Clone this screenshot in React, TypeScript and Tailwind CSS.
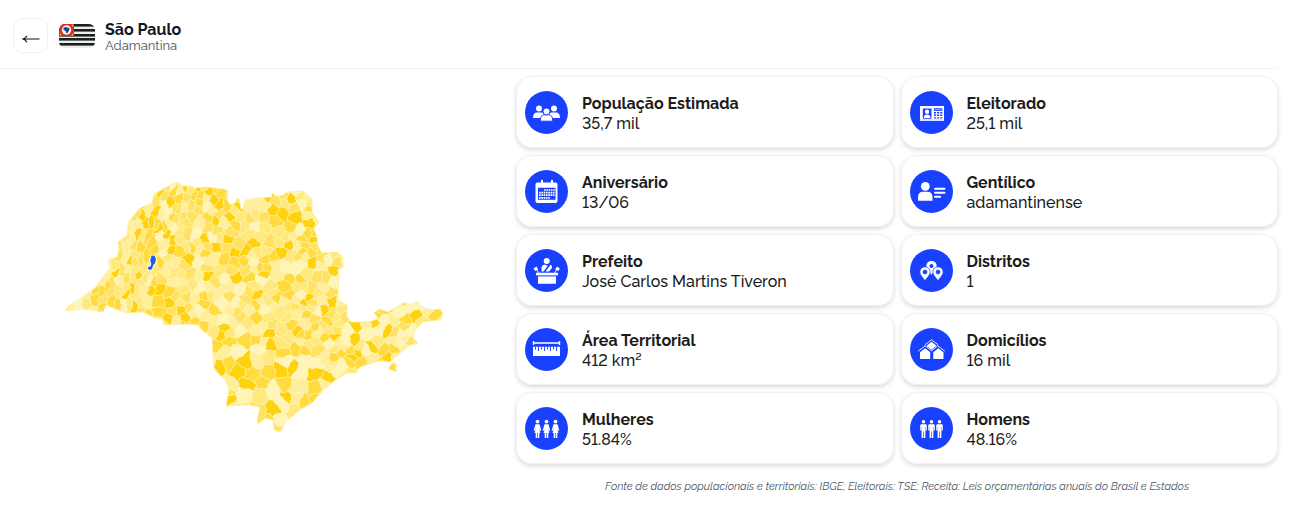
import type { ReactNode } from 'react'

type Point = [number, number]
type Seed = { p: Point; shade: number; r: number }

const SHADES = ['#fff5b8', '#ffef9a', '#ffe97c', '#ffe262', '#ffdb3e', '#ffd20f']

const OUTLINE =
  'M65 310L70 305L78 300L85 295L95 288L102 278L110 268L108 260L117 257L119 250L118 242L127 235L128 226L129 221L140 208L152 203L154 194L165 188L172 184L177 182L183 186L192 186L195 188L207 187L224 189L228 191L227 199L230 205L235 203L237 198L239 199L241 209L244 208L245 200L258 198L272 197L272 193L277 196L283 195L287 192L303 191L312 199L312 212L319 222L314 229L317 237L318 246L322 253L337 252L343 257L343 267L338 270L339 278L338 295L338 300L347 305L347 315L351 322L362 322L372 321L378 318L374 313L379 309L388 312L403 303L412 304L417 301L422 307L432 310L440 309L443 313L440 320L423 322L415 330L413 338L418 343L410 345L398 355L390 362L380 361L372 363L360 367L356 373L347 373L333 382L323 390L313 402L297 412L286 422L280 432L274 430L273 420L265 418L258 424L257 420L260 407L248 405L226 406L229 390L225 380L214 369L213 357L212 338L202 330L198 325L188 324L164 325L162 319L155 318L143 312L127 313L115 309L106 305L103 312L83 309L66 311ZM389 367L394 362L398 366L395 368L397 372L389 369Z'

// shade, preferred size of the municipality, then its centres
const LANDMARKS: [number, number, Point[]][] = [
  [5, 7, [[160, 194], [208, 192], [219, 205], [238, 205], [143, 217], [206, 240], [235, 252], [236, 277], [245, 251], [283, 212], [291, 199], [288, 245], [310, 223], [316, 240], [313, 262], [334, 270], [258, 295], [310, 297], [333, 301], [180, 310], [186, 318], [168, 318]]],
  [5, 6, [[268, 332], [222, 335], [356, 324], [375, 323], [388, 331], [355, 340], [371, 347], [415, 315], [296, 332], [357, 352], [388, 357], [220, 366], [330, 378]]],
  [5, 8, [[237, 370], [246, 362], [292, 368], [248, 385], [281, 370], [288, 397], [273, 410], [229, 400], [151, 290], [160, 288]]],
  [5, 5, [[152, 222], [160, 229], [167, 234], [173, 240], [170, 249], [130, 261], [116, 274], [138, 277], [127, 293]]],
  [4, 10, [[275, 222], [245, 261], [285, 285], [305, 402], [384, 350], [95, 299], [112, 302], [132, 208], [436, 314], [315, 388], [268, 373]]],
  [1, 12, [[251, 205], [264, 205], [277, 275], [148, 209], [257, 360], [230, 385], [300, 385]]],
  [0, 11, [[174, 228], [240, 330], [236, 350], [305, 360], [316, 364], [367, 335], [334, 281], [300, 231], [272, 390], [245, 394], [280, 420], [410, 331], [78, 303], [342, 365], [384, 320], [200, 288], [222, 303]]],
]

const ADAMANTINA = 'M151.500 255.500L154.500 255.700L156 259L155 263L153 265.500L152 269L150 270L148 269L148.200 267L151 266L151.200 263L150.200 261Z'

// The western municipalities are long strips, so cells are computed in a widened space there
const STRETCH = 1.6
const slant = (y: number) => 0.4 * (y - 250)

function widen([x, y]: Point): Point {
  const u = x + slant(y)
  return u < 172 ? [172 - (172 - u) * STRETCH - slant(y), y] : [x, y]
}

function narrow([x, y]: Point): Point {
  const u = x + slant(y)
  return u < 172 ? [172 - (172 - u) / STRETCH - slant(y), y] : [x, y]
}

// Bends the straight cell sides a little, the same way for both neighbours
function wobble([x, y]: Point): Point {
  return [
    x + Math.sin(y * 0.9 + x * 0.3) * 0.7 + Math.sin(y * 0.31) * 0.8,
    y + Math.sin(x * 0.8 - y * 0.4) * 0.7 + Math.sin(x * 0.27) * 0.8,
  ]
}

function spacing([x, y]: Point) {
  if (y > 345 && x < 335) return 10
  if (x > 345) return 7.5
  if (x > 285 && y > 305) return 5.5
  if (x < 160) return 8.5
  return 6.8
}

function clip(poly: Point[], a: Point, b: Point): Point[] {
  const nx = b[0] - a[0]
  const ny = b[1] - a[1]
  const c = (nx * (a[0] + b[0]) + ny * (a[1] + b[1])) / 2
  const side = (p: Point) => nx * p[0] + ny * p[1] - c
  const out: Point[] = []
  poly.forEach((p, i) => {
    const q = poly[(i + 1) % poly.length]
    const sp = side(p)
    const sq = side(q)
    if (sp <= 0) out.push(p)
    if (sp < 0 !== sq < 0) {
      const t = sp / (sp - sq)
      out.push([p[0] + t * (q[0] - p[0]), p[1] + t * (q[1] - p[1])])
    }
  })
  return out
}

function subdivide(poly: Point[]): Point[] {
  return poly.flatMap((p, i) => {
    const q = poly[(i + 1) % poly.length]
    return [0, 0.25, 0.5, 0.75].map((t): Point => [p[0] + t * (q[0] - p[0]), p[1] + t * (q[1] - p[1])])
  })
}

function buildCells() {
  let state = 20713
  const random = () => {
    state = (state * 1664525 + 1013904223) % 4294967296
    return state / 4294967296
  }
  const seeds: Seed[] = LANDMARKS.flatMap(([shade, r, points]) =>
    points.map(p => ({ p: widen(p), shade, r })),
  )
  for (let i = 0; i < 9000; i++) {
    const p: Point = [-40 + random() * 490, 178 + random() * 258]
    const r = spacing(narrow(p)) * (0.6 + random() * 0.9)
    if (seeds.every(s => Math.hypot(s.p[0] - p[0], s.p[1] - p[1]) > (s.r + r) / 2)) {
      seeds.push({ p, shade: Math.floor(0.6 + random() * 4.8), r })
    }
  }
  return seeds.map(({ p, shade }) => {
    const [x, y] = p
    let poly: Point[] = [[x - 25, y - 25], [x + 25, y - 25], [x + 25, y + 25], [x - 25, y + 25]]
    for (const s of seeds) {
      if (s.p !== p && Math.hypot(s.p[0] - x, s.p[1] - y) < 50) poly = clip(poly, p, s.p)
    }
    const points = subdivide(poly).map(v => wobble(narrow(v)).map(n => n.toFixed(1)).join(' '))
    return { d: 'M' + points.join('L') + 'Z', fill: SHADES[shade] }
  })
}

const CELLS = buildCells()

function StateMap() {
  return (
    <svg viewBox="64 181 381 253" className="w-3/4" role="img" aria-label="Mapa de São Paulo">
      <clipPath id="sp-outline">
        <path d={OUTLINE} />
      </clipPath>
      <g clipPath="url(#sp-outline)" stroke="#fff5be" strokeWidth="0.55" strokeLinejoin="round">
        {CELLS.map((cell, i) => (
          <path key={i} d={cell.d} fill={cell.fill} />
        ))}
      </g>
      <path d={OUTLINE} fill="none" stroke="#fff0a0" strokeWidth="0.8" strokeLinejoin="round" />
      <path d={ADAMANTINA} fill="#1d5ce8" stroke="#fffbe6" strokeWidth="1.4" paintOrder="stroke" />
    </svg>
  )
}

function Flag() {
  return (
    <svg viewBox="0 0 36 24" className="h-6 w-9 rounded-md" aria-hidden="true">
      <rect width="36" height="24" fill="#eceeec" />
      {[0, 5, 10, 14, 19].map(y => (
        <rect key={y} y={y} width="36" height="2.6" fill="#1c211e" />
      ))}
      <rect width="15" height="12" fill="#dd2b22" />
      <circle cx="7.5" cy="6" r="4.7" fill="#fff" />
      <path d="M4.3 3.8l2.700-.8 1.200.6 2.300.4-.3 2.500-2 2.700-1.200-.3-.4-2-2-1z" fill="#23408f" />
      {[[1.5, 1.5], [13.5, 1.5], [1.5, 10.5], [13.5, 10.5]].map(([x, y]) => (
        <circle key={`${x}-${y}`} cx={x} cy={y} r="0.9" fill="#f6c01d" />
      ))}
    </svg>
  )
}

function Icon({ children }: { children: ReactNode }) {
  return (
    <svg viewBox="0 0 43 43" className="size-[43px] shrink-0 rounded-full bg-[#1a40ff]" fill="#fff" aria-hidden="true">
      {children}
    </svg>
  )
}

const blue = '#1a40ff'

const people = (
  <Icon>
    <circle cx="14" cy="17.6" r="3" />
    <circle cx="29" cy="17.6" r="3" />
    <path d="M8 27q0-5.5 4-5.5h4q4 0 4 5.5zM23 27q0-5.5 4-5.5h4q4 0 4 5.5z" />
    <g stroke={blue} strokeWidth="1">
      <path d="M15.2 30.2q0-6.4 4.3-6.4h4q4.3 0 4.3 6.4z" />
      <circle cx="21.5" cy="20.4" r="3.5" />
    </g>
  </Icon>
)

const calendar = (
  <Icon>
    <path fillRule="evenodd" d="M12.5 12.5h18q2 0 2 2v16.500q0 2-2 2h-18q-2 0-2-2v-16.500q0-2 2-2zM13 17.800v12h17.500v-12z" />
    <rect x="16" y="9.800" width="2" height="5" rx="1" />
    <rect x="26" y="9.800" width="2" height="5" rx="1" />
    <g stroke="#fff" strokeWidth="1.700" strokeDasharray="1.700 0.600">
      <path d="M19 20h11.200M14 22.600h16M14 25.200h16M14 27.800h11.500" />
    </g>
  </Icon>
)

const voterCard = (
  <Icon>
    <path d="M10 15h24v15H10z" />
    <path d="M12.800 17.500h8.700v10.200h-8.700zM24 17.300h8.300v2.700H24z" fill={blue} />
    <path d="M10 29h24" stroke={blue} strokeWidth="0.5" strokeDasharray="1 1" />
    <circle cx="17.100" cy="20.800" r="2.200" />
    <path d="M13.800 27q0-3.500 3.300-3.500t3.300 3.500z" />
    <g stroke={blue} strokeWidth="1.400" strokeDasharray="2.100 1">
      <path d="M24 21.800h8.300M24 24.200h8.300M24 26.900h8.300" />
    </g>
    <path d="M25 18.700h6.500" stroke="#fff" strokeWidth="0.6" />
  </Icon>
)

const personLines = (
  <Icon>
    <circle cx="15.300" cy="16.300" r="4.400" />
    <path d="M8 30.700v-3.200q0-5.800 5-5.800h4.500q5 0 5 5.800v3.200z" />
    <path d="M25 18.800h9.500M25 22.800h9.500M25 26.800h5.200" stroke="#fff" strokeWidth="1.900" strokeLinecap="round" />
  </Icon>
)

const mayor = (
  <Icon>
    <circle cx="21.700" cy="11.900" r="3" />
    <path d="M16.500 22.500v-4.200q.4-2.600 3-2.900l3.300 1.400-4.300 5.700zM20.500 22.500l5.300-6.900q1.300 1.300 1.200 3.500l-3 3.400z" />
    <path d="M11 23.700h22v2.800H11zM13 27.200h18v7.500H13z" />
    <path d="M8.500 19.500l3-2 1.700 3-3 1.500zM34.900 19.500l-3-2-1.700 3 3 1.500z" />
    <path d="M11.500 20.500l2.500 3.500M31.900 20.500l-2.500 3.500" stroke="#fff" strokeWidth="0.9" />
    <path d="M11 26.900h22" stroke={blue} strokeWidth="0.5" />
  </Icon>
)

const pin = 'M0-5.200a5.200 5.200 0 0 1 5.200 5.200c0 3.200-3.700 6-5.200 8.800c-1.500-2.800-5.200-5.600-5.200-8.800a5.200 5.200 0 0 1 5.200-5.200zM0-2a2 2 0 1 0 0 4a2 2 0 1 0 0-4z'

const pins = (
  <Icon>
    <path d={pin} fillRule="evenodd" transform="translate(21.500 17)" />
    <g fillRule="evenodd" stroke={blue} strokeWidth="0.700">
      <path d={pin} transform="translate(15 23)" />
      <path d={pin} transform="translate(28 23)" />
    </g>
  </Icon>
)

const ruler = (
  <Icon>
    <path d="M8.500 13v4M34.500 13v4M8 15h27" stroke="#fff" strokeWidth="1.400" />
    <path d="M8 18.700h27v9.300H8z" />
    <path d="M10.500 18.500v3M13.500 18.500v4.500M16.500 18.500v3M19.500 18.500v4.500M22.500 18.500v3M25.500 18.500v4.500M28.500 18.500v3M31.500 18.500v4.500" stroke={blue} strokeWidth="0.900" />
  </Icon>
)

const houses = (
  <Icon>
    <path d="M21.500 13.700l5.600 4.600-5.600 4.900-5.600-4.900z" />
    <path d="M10 24.200l5.200-4 5 4v6.800H10zM23.300 24.200l5-4 5.200 4v6.800H23.300z" />
    <path d="M8.200 23.300l7-5.400 6.300 5 6.300-5 7 5.400M14.800 16.900l6.700-5 6.700 5" fill="none" stroke={blue} strokeWidth="1.700" />
    <path d="M8.200 23.200l7-5.400 6.300 5 6.300-5 7 5.400M14.800 16.800l6.700-5 6.700 5" fill="none" stroke="#fff" strokeWidth="0.9" />
  </Icon>
)

const women = (
  <Icon>
    {[12.5, 21.5, 30.5].map(x => (
      <g key={x} transform={`translate(${x} 0)`}>
        <circle cy="14.600" r="1.900" />
        <path d="M-2 17.200h4l1.800 6.200-1.200.4-1.100-2.800 1.400 5h-1.100v4.900h-1.500v-4.900h-.6v4.900h-1.500v-4.900h-1.100l1.400-5-1.100 2.800-1.200-.4z" />
      </g>
    ))}
  </Icon>
)

const men = (
  <Icon>
    {[13.5, 21.5, 29.5].map(x => (
      <g key={x} transform={`translate(${x} 0)`}>
        <circle cy="14.800" r="1.800" />
        <path d="M-2.100 17.200h4.200q1.200 0 1.200 1.400v5h-1.100v-3.600h-.3v11h-1.600v-6.500h-.6v6.500h-1.600v-11h-.3v3.600h-1.100v-5q0-1.400 1.200-1.400z" />
      </g>
    ))}
  </Icon>
)

const stats = [
  { label: 'População Estimada', value: '35,7 mil', icon: people },
  { label: 'Eleitorado', value: '25,1 mil', icon: voterCard },
  { label: 'Aniversário', value: '13/06', icon: calendar },
  { label: 'Gentílico', value: 'adamantinense', icon: personLines },
  { label: 'Prefeito', value: 'José Carlos Martins Tiveron', icon: mayor },
  { label: 'Distritos', value: '1', icon: pins },
  { label: 'Área Territorial', value: '412 km²', icon: ruler },
  { label: 'Domicílios', value: '16 mil', icon: houses },
  { label: 'Mulheres', value: '51.84%', icon: women },
  { label: 'Homens', value: '48.16%', icon: men },
]

export default function App() {
  return (
    <div className="bg-white pr-3.5 font-['Raleway','Open_Sans',sans-serif] text-[#1c1c1c] lining-nums">
      <header className="flex items-center border-b border-gray-100 pt-[17px] pb-3.5 pl-[13px]">
        <button type="button" aria-label="Voltar" className="flex size-[35px] items-center justify-center rounded-[10px] border border-[#f0f0f8]">
          <svg viewBox="0 0 18 10" className="mt-1.5 h-2.5 w-[18px]" fill="none" stroke="#111" strokeWidth="1.2" aria-hidden="true">
            <path d="M17.500 5H1.500M5 1.800Q3.500 4.300 1 5Q3.500 5.700 5 8.200" />
          </svg>
        </button>
        <div className="ml-[11px] flex items-center gap-2.5">
          <Flag />
          <div className="pt-1">
            <h1 className="text-base leading-[17px] font-bold text-gray-900">São Paulo</h1>
            <p className="text-[13px] leading-4 text-gray-600">Adamantina</p>
          </div>
        </div>
      </header>
      <main className="grid grid-cols-[2fr_3fr] gap-2 pt-[7px]">
        <div className="flex items-start justify-center pt-[105px]">
          <StateMap />
        </div>
        <section>
          <dl className="grid grid-cols-2 gap-[7px]">
            {stats.map(({ label, value, icon }) => (
              <div key={label} className="flex items-center gap-3.5 rounded-2xl border border-[#f0f0f6] px-2 pt-3.5 pb-[13px] shadow-[0_2px_4px_rgba(0,0,0,0.15)]">
                {icon}
                <div className="pt-0.5 leading-5">
                  <dt className="font-bold">{label}</dt>
                  <dd className="font-medium">{value}</dd>
                </div>
              </div>
            ))}
          </dl>
          <p className="mt-[13px] text-center text-[11px] leading-5 text-gray-600 italic">
            Fonte de dados populacionais e territoriais: IBGE; Eleitorais: TSE; Receita: Leis orçamentárias anuais do Brasil e Estados
          </p>
        </section>
      </main>
    </div>
  )
}
